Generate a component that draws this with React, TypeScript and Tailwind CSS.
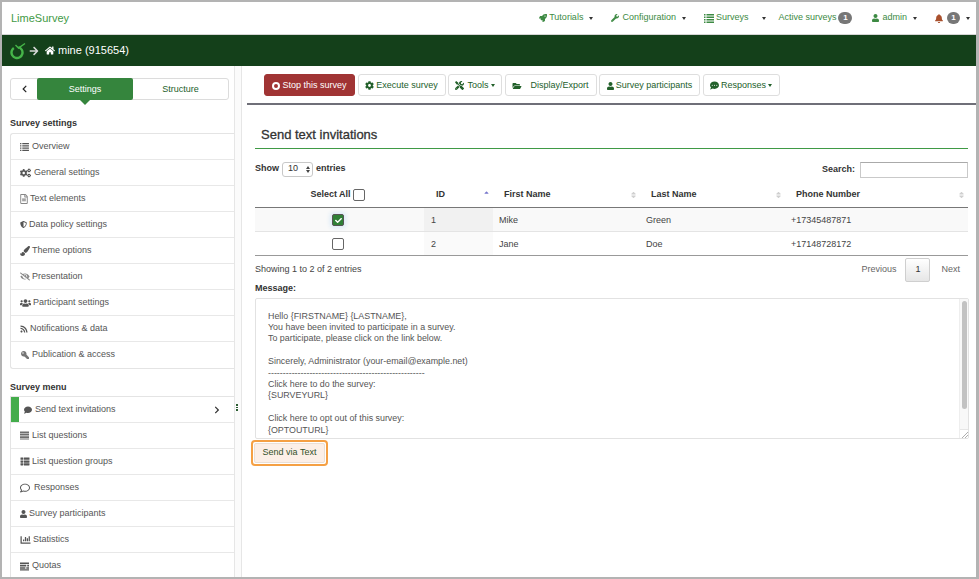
import type { ReactNode } from 'react';
import {
  FaArrowRight, FaBell, FaChartBar, FaChevronLeft, FaChevronRight, FaCog, FaCogs, FaComment, FaEyeSlash,
  FaRegFileAlt, FaFolderOpen, FaHome, FaKey, FaPaintBrush, FaRegComment, FaRocket, FaRss, FaShieldAlt,
  FaThList, FaTools, FaUser, FaUsers, FaWrench, FaCheck, FaSort, FaCaretUp, FaCommentDots,
} from 'react-icons/fa';

const Caret = () => (
  <span className="inline-block w-0 h-0 border-x-[2.5px] border-x-transparent border-t-[3px] border-t-current" />
);

// fa-list as in the reference: small square bullets + lines
const ListIcon = ({ className = '' }: { className?: string }) => (
  <svg viewBox="0 0 10 9" className={className} fill="currentColor">
    <path d="M0 0h1.5v1.5H0zM2.5 0H10v1.5H2.5zM0 2.5h1.5V4H0zM2.5 2.5H10V4H2.5zM0 5h1.5v1.5H0zM2.5 5H10v1.5H2.5zM0 7.5h1.5V9H0zM2.5 7.5H10V9H2.5z" />
  </svg>
);

const RowsIcon = () => (
  <svg viewBox="0 0 10 9" className="w-[10px] h-[9px]" fill="currentColor">
    <path d="M0 0h10v2H0zM0 2.6h10v2H0zM0 5.2h10v2H0zM0 7.8h10v1.2H0z" opacity="0.85" />
  </svg>
);

const QuotaIcon = () => (
  <svg viewBox="0 0 10 9" className="w-[10px] h-[9px]" fill="currentColor">
    <path d="M0 0h10v1.8H0zM0 2.6h7v1.8H0zM8 2.6h2v1.8H8zM0 5.2h6v1.8H0zM7 5.2h3v1.8H7zM0 7.6h10V9H0z" />
  </svg>
);

const NavItem = ({ icon, label, caret = true, className = '' }: { icon?: ReactNode; label?: ReactNode; caret?: boolean; className?: string }) => (
  <span className={`flex items-center text-[#3d8a43] ${className}`}>
    {icon}
    {label}
    {caret && <span className="ml-[6px] flex text-[#333]"><Caret /></span>}
  </span>
);

const settingsMenu = [
  { w: 'w-[9px]', icon: <ListIcon className="w-[9px] h-[8px] shrink-0" />, label: 'Overview' },
  { w: 'w-[11px]', icon: <FaCogs className="w-[11px] h-[10px] shrink-0" />, label: 'General settings' },
  { w: 'w-[7px]', icon: <FaRegFileAlt className="w-[8px] h-[10px] shrink-0 opacity-70" />, label: 'Text elements' },
  { w: 'w-[6px]', icon: <FaShieldAlt className="w-[7px] h-[9px] shrink-0" />, label: 'Data policy settings' },
  { w: 'w-[9px]', icon: <FaPaintBrush className="w-[10px] h-[10px] shrink-0" />, label: 'Theme options' },
  { w: 'w-[9px]', icon: <FaEyeSlash className="w-[10px] h-[9px] shrink-0 opacity-70" />, label: 'Presentation' },
  { w: 'w-[10px]', icon: <FaUsers className="w-[11px] h-[10px] shrink-0" />, label: 'Participant settings' },
  { w: 'w-[7px]', icon: <FaRss className="w-[8px] h-[8px] shrink-0" />, label: 'Notifications & data' },
  { w: 'w-[9px]', icon: <FaKey className="w-[10px] h-[8px] shrink-0 -scale-x-100 opacity-80" />, label: 'Publication & access' },
];

const surveyMenu = [
  { w: 'w-[9px]', icon: <RowsIcon />, label: 'List questions' },
  { w: 'w-[9px]', icon: <FaThList className="w-[10px] h-[9px] shrink-0" />, label: 'List question groups' },
  { w: 'w-[11px]', icon: <FaRegComment className="w-[10px] h-[10px] shrink-0" />, label: 'Responses' },
  { w: 'w-[6px]', icon: <FaUser className="w-[7px] h-[8px] shrink-0" />, label: 'Survey participants' },
  { w: 'w-[10px]', icon: <FaChartBar className="w-[11px] h-[10px] shrink-0" />, label: 'Statistics' },
  { w: 'w-[9px]', icon: <QuotaIcon />, label: 'Quotas' },
];

const MenuRow = ({ icon, label, w }: { icon: ReactNode; label: string; w: string }) => (
  <div className="h-[26px] flex items-center gap-[3px] pl-[9px] border-b border-[#e8e8e8] last:border-b-0 text-[#555] text-[9px]">
    <span className={`flex shrink-0 ${w}`}>{icon}</span>
    {label}
  </div>
);

const ToolButton = ({ children, className = '' }: { children: ReactNode; className?: string }) => (
  <div className={`h-[22px] pt-px flex items-center justify-center gap-[2px] rounded-[3px] border border-[#dedede] bg-white text-[#22602a] text-[9px] ${className}`}>
    {children}
  </div>
);

const SortIcon = () => <FaSort className="w-[7px] h-[8px] text-[#d0d0d0]" />;

const Checkbox = ({ checked = false }: { checked?: boolean }) =>
  checked ? (
    <span className="w-[12px] h-[12px] rounded-[2px] bg-[#2f8037] border border-[#555] flex items-center justify-center shadow-[0_0_4px_2px_#dbeaf7]">
      <FaCheck className="w-[7px] h-[7px] text-white" />
    </span>
  ) : (
    <span className="block w-[12px] h-[12px] rounded-[2px] border border-[#666] bg-white" />
  );

const LimeLogo = () => (
  <svg width="17" height="18" viewBox="0 0 17 18" fill="none">
    <circle cx="7" cy="10.5" r="5.5" stroke="#46b549" strokeWidth="2.4" strokeDasharray="29 6" transform="rotate(-75 7 10.5)" />
    <path d="M5.5 3 L8.5 6 L15 1.5" stroke="#46b549" strokeWidth="1.4" />
  </svg>
);

const App = () => {
  return (
    <div className="w-[979px] h-[579px] overflow-hidden bg-white border-y-2 border-l-2 border-r-[3px] border-[#b3b3b3] flex flex-col font-['Liberation_Sans',Arial,sans-serif] text-[9px]">
      {/* top nav */}
      <header className="h-[33px] shrink-0 flex items-center pl-[9px] pr-[6px] border-b border-[#d5d5d5]">
        <span className="text-[#3f9a45] text-[11px]">LimeSurvey</span>
        <div className="ml-auto flex items-center h-full">
          <NavItem icon={<FaRocket className="w-[8px] h-[8px] mr-[2px]" />} label="Tutorials" />
          <NavItem className="ml-[18px]" icon={<FaWrench className="w-[8px] h-[8px] mr-[3px]" />} label="Configuration" />
          <NavItem className="ml-[18px]" caret={false} icon={<ListIcon className="w-[10px] h-[9px] mr-[2px]" />} label="Surveys" />
          <span className="ml-[14px] text-[#333] flex"><Caret /></span>
          <span className="ml-[12px] flex items-center text-[#3d8a43]">
            Active surveys
            <span className="ml-[2px] w-[14px] h-[12px] rounded-full bg-[#777] text-white text-[8px] font-bold flex items-center justify-center">1</span>
          </span>
          <NavItem className="ml-[20px]" icon={<FaUser className="w-[7px] h-[8px] mr-[3px]" />} label="admin" />
          <span className="ml-[18px] flex items-center">
            <FaBell className="w-[8px] h-[9px] text-[#a9502d]" />
            <span className="ml-[4px] w-[13px] h-[12px] rounded-full bg-[#777] text-white text-[8px] font-bold flex items-center justify-center">1</span>
            <span className="ml-[6px] flex text-[#333]"><Caret /></span>
          </span>
        </div>
      </header>

      {/* survey bar */}
      <div className="h-[31px] shrink-0 bg-[#14401a] flex items-center pl-[8px] text-white">
        <LimeLogo />
        <FaArrowRight className="ml-[2px] w-[10px] h-[10px] text-[#d8d8d8]" />
        <FaHome className="ml-[6px] w-[10px] h-[9px]" />
        <span className="ml-[3px] text-[11px]">mine (915654)</span>
      </div>

      <div className="flex-1 flex min-h-0">
        {/* sidebar */}
        <aside className="w-[232px] shrink-0 pl-[8px] pt-[12px] relative">
          <div className="w-[219px] h-[22px] flex border border-[#dcdcdc] rounded-[3px] text-[9px]">
            <div className="w-[26px] flex items-center justify-center">
              <FaChevronLeft className="w-[7px] h-[8px] text-[#222]" />
            </div>
            <div className="w-[96px] -my-px pt-px bg-[#35853d] text-white rounded-[2px] flex items-center justify-center relative">
              Settings
              <span className="absolute top-full left-1/2 -translate-x-1/2 w-0 h-0 border-x-[5px] border-x-transparent border-t-[5px] border-t-[#35853d]" />
            </div>
            <div className="flex-1 pt-px flex items-center justify-center text-[#22602a]">Structure</div>
          </div>

          <div className="mt-[17px] h-[16px] font-bold text-[#333]">Survey settings</div>
          <div className="border-y border-l border-[#e4e4e4] rounded-l-[3px]">
            {settingsMenu.map((item) => (
              <MenuRow key={item.label} icon={item.icon} label={item.label} w={item.w} />
            ))}
          </div>

          <div className="mt-[12px] h-[15px] font-bold text-[#333] leading-[12px]">Survey menu</div>
          <div className="border-t border-l border-[#e4e4e4]">
            <div className="h-[26px] flex items-center border-b border-[#e8e8e8] text-[#555] text-[9px]">
              <span className="w-[8px] h-full bg-[#43ac4b] shrink-0" />
              <FaComment className="ml-[5px] w-[8px] h-[8px] mr-[3px]" />
              Send text invitations
              <FaChevronRight className="ml-auto mr-[14px] w-[6px] h-[8px] text-[#333]" />
            </div>
            {surveyMenu.map((item) => (
              <MenuRow key={item.label} icon={item.icon} label={item.label} w={item.w} />
            ))}
          </div>
        </aside>

        {/* drag strip */}
        <div className="w-[8px] shrink-0 border-x border-[#e6e6e6] bg-[#fbfbfb] relative">
          <span className="absolute left-[1px] top-[338px] flex flex-col gap-px">
            <i className="block w-[1.5px] h-[1.5px] bg-[#2c5e32]" />
            <i className="block w-[1.5px] h-[1.5px] bg-[#2c5e32]" />
            <i className="block w-[1.5px] h-[1.5px] bg-[#2c5e32]" />
          </span>
        </div>

        {/* main */}
        <main className="flex-1 min-w-0 flex flex-col">
          <div className="h-[39px] shrink-0 pt-[8px] pl-[17px] flex gap-[2.5px] border-b-2 border-[#6f6f78] ml-[5px] -mr-[2px]">
            <ToolButton className="w-[91px] !bg-[#a03434] !border-[#a03434] !text-white">
              <span className="w-[8px] h-[8px] rounded-full border-2 border-white" />
              Stop this survey
            </ToolButton>
            <ToolButton className="w-[88px]"><FaCog className="w-[9px] h-[9px]" />Execute survey</ToolButton>
            <ToolButton className="w-[54px]"><FaTools className="w-[9px] h-[9px] mr-[1px]" />Tools<Caret /></ToolButton>
            <ToolButton className="w-[92px] gap-[8px]"><FaFolderOpen className="w-[10px] h-[8px]" />Display/Export</ToolButton>
            <ToolButton className="w-[101px]"><FaUser className="w-[7px] h-[8px]" />Survey participants</ToolButton>
            <ToolButton className="w-[77px]"><FaCommentDots className="w-[9px] h-[9px]" />Responses<Caret /></ToolButton>
          </div>

          <div className="pl-[13px] pr-[8px] flex-1">
            <div className="mt-[21px] h-[23px] pl-[6px] border-b border-[#3f9a45] text-[13px] text-[#333] leading-[18px] [-webkit-text-stroke:0.3px_#333]">
              Send text invitations
            </div>

            <div className="mt-[11px] h-[18px] flex items-center justify-between">
              <div className="flex items-center font-bold text-[#333]">
                Show
                <span className="mx-[3px] w-[31px] h-[15px] border border-[#c8c8c8] rounded-[3px] flex items-center justify-between pl-[5px] pr-[2px] font-normal">
                  10
                  <span className="flex flex-col gap-px text-[#444]">
                    <i className="block w-0 h-0 border-x-[2px] border-x-transparent border-b-[3px] border-b-current" />
                    <i className="block w-0 h-0 border-x-[2px] border-x-transparent border-t-[3px] border-t-current" />
                  </span>
                </span>
                entries
              </div>
              <div className="flex items-center font-bold text-[#333] translate-y-[1px]">
                Search:
                <span className="ml-[5px] w-[108px] h-[16px] border border-[#c9c9c9] border-t-[#aaa] bg-white" />
              </div>
            </div>

            <table className="mt-[5px] w-[713px] table-fixed border-collapse text-[9px] text-[#444]">
              <colgroup>
                <col className="w-[169px]" />
                <col className="w-[69px]" />
                <col className="w-[147px]" />
                <col className="w-[145px]" />
                <col />
              </colgroup>
              <thead>
                <tr className="h-[24px] border-b border-[#777] font-bold text-[#333]">
                  <th className="p-0 font-bold">
                    <span className="flex items-center justify-center gap-[2px] pr-[4px]">Select All <Checkbox /></span>
                  </th>
                  <th className="p-0 font-bold">
                    <span className="flex items-center pl-[12px] pr-[3px] justify-between">ID<FaCaretUp className="w-[7px] h-[7px] -mt-[4px] text-[#7777cc]" /></span>
                  </th>
                  <th className="p-0 font-bold">
                    <span className="flex items-center pl-[11px] pr-[3px] justify-between">First Name<SortIcon /></span>
                  </th>
                  <th className="p-0 font-bold">
                    <span className="flex items-center pl-[11px] pr-[3px] justify-between">Last Name<SortIcon /></span>
                  </th>
                  <th className="p-0 font-bold">
                    <span className="flex items-center pl-[11px] pr-[3px] justify-between">Phone Number<SortIcon /></span>
                  </th>
                </tr>
              </thead>
              <tbody>
                <tr className="h-[24px] bg-[#f9f9f9] border-b border-[#e4e4e4]">
                  <td className="p-0 pt-[2px]"><span className="flex justify-center pr-[3px]"><Checkbox checked /></span></td>
                  <td className="p-0 pt-[3px] pl-[7px] bg-[#f1f1f1]">1</td>
                  <td className="p-0 pt-[3px] pl-[6px]">Mike</td>
                  <td className="p-0 pt-[3px] pl-[6px]">Green</td>
                  <td className="p-0 pt-[3px] pl-[6px]">+17345487871</td>
                </tr>
                <tr className="h-[24px] border-b border-[#999]">
                  <td className="p-0 pt-[2px]"><span className="flex justify-center pr-[3px]"><Checkbox /></span></td>
                  <td className="p-0 pt-[3px] pl-[7px] bg-[#fafafa]">2</td>
                  <td className="p-0 pt-[3px] pl-[6px]">Jane</td>
                  <td className="p-0 pt-[3px] pl-[6px]">Doe</td>
                  <td className="p-0 pt-[3px] pl-[6px]">+17148728172</td>
                </tr>
              </tbody>
            </table>

            <div className="h-[26px] flex items-center justify-between text-[#444]">
              <span className="mt-[3px]">Showing 1 to 2 of 2 entries</span>
              <div className="flex items-center text-[#666] mt-[2px]">
                <span>Previous</span>
                <span className="ml-[9px] mr-[11px] w-[25px] h-[24px] border border-[#cfcfcf] rounded-[2px] bg-gradient-to-b from-white to-[#e6e6e6] flex items-center justify-center text-[#333]">1</span>
                <span className="mr-[8px]">Next</span>
              </div>
            </div>

            <div className="h-[16px] font-bold text-[#333] leading-[12px]">Message:</div>

            <div className="w-[714px] h-[141px] border border-[#e2e2e2] rounded-[2px] relative pl-[12px] pt-[12px] text-[#555] text-[8.9px] leading-[11.4px] overflow-hidden">
              <div>Hello {'{FIRSTNAME}'} {'{LASTNAME}'},</div>
              <div>You have been invited to participate in a survey.</div>
              <div>To participate, please click on the link below.</div>
              <div className="h-[11.4px]" />
              <div>Sincerely, Administrator (your-email@example.net)</div>
              <div>-----------------------------------------------------</div>
              <div>Click here to do the survey:</div>
              <div>{'{SURVEYURL}'}</div>
              <div className="h-[11.4px]" />
              <div>Click here to opt out of this survey:</div>
              <div>{'{OPTOUTURL}'}</div>
              {/* scrollbar */}
              <div className="absolute right-0 top-0 bottom-0 w-[9px] bg-[#f8f8f8] border-l border-[#eee] flex flex-col">
                <span className="mt-[2px] mx-auto w-[5px] h-[108px] rounded-full bg-[#c2c2c2]" />
                <span className="mt-auto h-[9px] border-t border-[#e6e6e6] bg-white relative overflow-hidden">
                  <svg viewBox="0 0 9 9" className="absolute inset-0 w-[9px] h-[9px]">
                    <path d="M2 8 L8 2 M5 8 L8 5" stroke="#999" strokeWidth="0.8" />
                  </svg>
                </span>
              </div>
            </div>

            <div className="mt-px -ml-[4px] w-[77px] h-[26px] rounded-[4px] border-2 border-[#f5a044] p-px">
              <div className="w-full h-full rounded-[2px] border border-[#eadfd6] bg-[#fcefe7] text-[#33502a] text-[9px] flex items-center justify-center">
                Send via Text
              </div>
            </div>
          </div>
        </main>
      </div>
    </div>
  );
};

export default App;
